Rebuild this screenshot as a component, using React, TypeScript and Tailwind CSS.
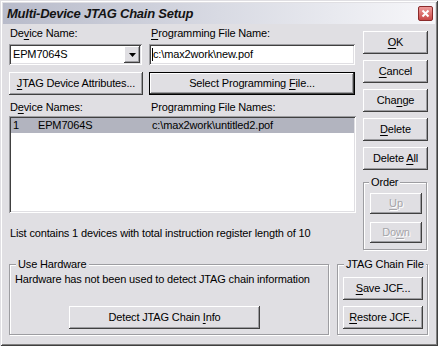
import React from "react";

const U = ({ c }: { c: string }) => (
  <span className="underline decoration-1 underline-offset-[2px]">{c}</span>
);

const raised =
  "bg-[#e0dfe3] shadow-[inset_-1px_-1px_0_#404040,inset_1px_1px_0_#ffffff,inset_-2px_-2px_0_#9d9da1,inset_2px_2px_0_#e0dfe3]";
const sunken =
  "bg-white shadow-[inset_1px_1px_0_#9d9da1,inset_-1px_-1px_0_#ffffff,inset_2px_2px_0_#404040,inset_-2px_-2px_0_#e0dfe3]";

function Btn({
  children,
  className = "",
  disabled = false,
}: {
  children: React.ReactNode;
  className?: string;
  disabled?: boolean;
}) {
  return (
    <div
      className={`flex items-center justify-center ${raised} ${
        disabled ? "text-[#a5a5a9] [text-shadow:1px_1px_0_#ffffff]" : "text-black"
      } ${className}`}
    >
      {children}
    </div>
  );
}

function Group({
  label,
  className = "",
  labelClass = "left-[7px]",
  children,
}: {
  label: string;
  className?: string;
  labelClass?: string;
  children?: React.ReactNode;
}) {
  return (
    <div className={`relative ${className}`}>
      <div className="absolute left-0 right-[1px] top-[8px] bottom-[1px] border border-[#9d9da1] shadow-[1px_1px_0_#ffffff,inset_1px_1px_0_#ffffff]" />
      <div className={`absolute top-[2px] ${labelClass} px-[2px] bg-[#e0dfe3] leading-[13px]`}>
        {label}
      </div>
      {children}
    </div>
  );
}

export default function App() {
  return (
    <div className="w-[438px] h-[346px] bg-[#e0dfe3] relative overflow-hidden font-['Liberation_Sans',Arial,sans-serif] text-[11px] leading-[13px] tracking-[-0.15px] text-black shadow-[inset_1px_1px_0_#e0dfe3,inset_-1px_-1px_0_#404040,inset_2px_2px_0_#ffffff,inset_-2px_-2px_0_#808080]">
      {/* Title bar */}
      <div className="mx-[3px] mt-[3px] h-[21px] bg-gradient-to-r from-[#b8bbca] via-[#d8dae3] to-[#f7f7fa] flex items-center justify-between pl-[4px] pr-[2px]">
        <span className="font-bold italic text-[13px] leading-[16px] text-[#141414] tracking-[-0.25px]">
          Multi-Device JTAG Chain Setup
        </span>
        <div className="w-[15px] h-[15px] rounded-[2px] border border-[#8a2a2a] bg-gradient-to-b from-[#ee9a9a] to-[#c84646] flex items-center justify-center">
          <svg width="9" height="9" viewBox="0 0 9 9">
            <path d="M1.5 1.5L7.5 7.5M7.5 1.5L1.5 7.5" stroke="#ffffff" strokeWidth="2" />
          </svg>
        </div>
      </div>

      {/* Top section */}
      <div className="flex pl-[9px] gap-[7px]">
        {/* Left column */}
        <div className="w-[347px] flex flex-col">
          <div className="mt-[3px] flex">
            <div className="w-[140px] pl-[1px]">
              De<U c="v" />ice Name:
            </div>
            <div className="pl-[2px]">
              <U c="P" />rogramming File Name:
            </div>
          </div>
          <div className="mt-[4px] flex gap-[7px]">
            <div className={`relative w-[133px] h-[21px] ${sunken} flex items-center`}>
              <span className="pl-[4px]">EPM7064S</span>
              <div
                className={`absolute right-[2px] top-[2px] bottom-[2px] w-[16px] ${raised} flex items-center justify-center`}
              >
                <svg width="7" height="4" viewBox="0 0 7 4">
                  <path d="M0 0H7L3.5 4Z" fill="#000000" />
                </svg>
              </div>
            </div>
            <div className={`w-[206px] h-[21px] ${sunken} flex items-center pl-[3px]`}>
              <span className="w-[1px] h-[13px] bg-black" />
              <span>c:\max2work\new.pof</span>
            </div>
          </div>
          <div className="mt-[7px] flex gap-[6px]">
            <Btn className="w-[134px] h-[23px]">
              <span>
                <U c="J" />TAG Device Attributes...
              </span>
            </Btn>
            <div className="w-[206px] h-[23px] border border-black">
              <Btn className="w-full h-full">
                <span>
                  Select Programming <U c="F" />ile...
                </span>
              </Btn>
            </div>
          </div>
          <div className="mt-[6px] flex">
            <div className="w-[142px] pl-[1px]">
              D<U c="e" />vice Names:
            </div>
            <div>Programming File Names:</div>
          </div>
          <div className={`mt-[2px] h-[97px] ${sunken} pt-[2px] px-[2px]`}>
            <div className="h-[15px] bg-[#b2b4bf] flex items-center">
              <span className="pl-[2px] w-[27px]">1</span>
              <span className="w-[114px]">EPM7064S</span>
              <span>c:\max2work\untitled2.pof</span>
            </div>
          </div>
          <div className="mt-[14px] pl-[1px]">
            List contains 1 devices with total instruction register length of 10
          </div>
        </div>

        {/* Right column */}
        <div className="w-[65px] flex flex-col">
          <div className="mt-[7px] flex flex-col gap-[6px]">
            <Btn className="h-[23px]">
              <span>
                <U c="O" />K
              </span>
            </Btn>
            <Btn className="h-[23px]">
              <span>
                <U c="C" />ancel
              </span>
            </Btn>
            <Btn className="h-[23px]">
              <span>
                Cha<U c="n" />ge
              </span>
            </Btn>
            <Btn className="h-[23px]">
              <span>
                <U c="D" />elete
              </span>
            </Btn>
            <Btn className="h-[23px]">
              <span>
                Delete <U c="A" />ll
              </span>
            </Btn>
          </div>
          <Group label="Order" className="mt-[4px] h-[77px]" labelClass="left-[6px]">
            <div className="pt-[19px] pl-[7px] flex flex-col gap-[8px]">
              <Btn className="w-[52px] h-[21px]" disabled>
                <span>
                  <U c="U" />p
                </span>
              </Btn>
              <Btn className="w-[52px] h-[21px]" disabled>
                <span>
                  Do<U c="w" />n
                </span>
              </Btn>
            </div>
          </Group>
        </div>
      </div>

      {/* Bottom section */}
      <div className="flex pl-[9px] gap-[7px] mt-[5px]">
        <Group label="Use Hardware" className="w-[321px] h-[80px]" labelClass="left-[7px]">
          <div className="pt-[17px] pl-[6px]">
            Hardware has not been used to detect JTAG chain information
          </div>
          <Btn className="ml-[60px] mt-[20px] w-[191px] h-[23px]">
            <span>
              Detect JTAG Chain <U c="I" />nfo
            </span>
          </Btn>
        </Group>
        <Group label="JTAG Chain File" className="w-[92px] h-[80px]" labelClass="left-[7px]">
          <div className="pt-[21px] pl-[6px] flex flex-col gap-[6px]">
            <Btn className="w-[80px] h-[23px]">
              <span>
                <U c="S" />ave JCF...
              </span>
            </Btn>
            <Btn className="w-[80px] h-[23px]">
              <span>
                <U c="R" />estore JCF...
              </span>
            </Btn>
          </div>
        </Group>
      </div>
    </div>
  );
}
